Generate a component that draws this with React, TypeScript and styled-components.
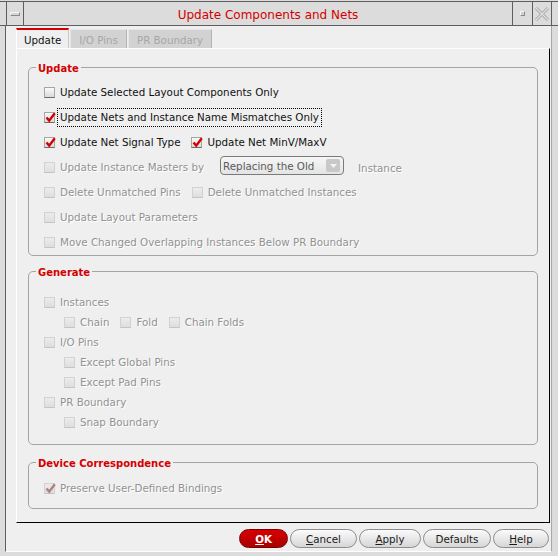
import React from 'react';
import styled, { createGlobalStyle } from 'styled-components';

// * global
const GlobalStyle = createGlobalStyle`
  html, body {
    margin: 0;
    padding: 0;
    background: #dcdcdc;
  }
  body {
    font-family: "DejaVu Sans", "Liberation Sans", sans-serif;
    font-size: 10.3px;
    color: #111;
  }
`;

// * type
type CheckProps = {
  /** 라벨 */
  label: string;
  checked?: boolean;
  disabled?: boolean;
  focused?: boolean;
};

type ButtonProps = {
  label: string;
  /** 밑줄 글자 위치 */
  mnemonic?: number;
  width: number;
  primary?: boolean;
};

// * component
function CheckMark({ disabled }: { disabled?: boolean }) {
  return (
    <MarkSvg width='13' height='13' viewBox='0 0 13 13'>
      <path
        d='M2.5 6.5 L5.2 9.6 L10.8 2.2'
        fill='none'
        stroke={disabled ? '#b08080' : '#d40000'}
        strokeWidth='2.4'
      />
    </MarkSvg>
  );
}

function Check({ label, checked, disabled, focused }: CheckProps) {
  return (
    <CheckWrap>
      <Box $disabled={disabled}>{checked && <CheckMark disabled={disabled} />}</Box>
      <Label $disabled={disabled} $focused={focused}>
        {label}
      </Label>
    </CheckWrap>
  );
}

function DialogButton({ label, mnemonic, width, primary }: ButtonProps) {
  return (
    <Btn $primary={primary} style={{ width }}>
      {mnemonic === undefined ? (
        label
      ) : (
        <>
          {label.slice(0, mnemonic)}
          <u>{label[mnemonic]}</u>
          {label.slice(mnemonic + 1)}
        </>
      )}
    </Btn>
  );
}

export default function App() {
  return (
    <>
      <GlobalStyle />
      <Window>
        <TitleBar>
          <FrameGap />
          <MenuButton>
            <Dash />
          </MenuButton>
          <Title>Update Components and Nets</Title>
          <MaxButton>
            <Dot />
          </MaxButton>
          <CloseButton>
            <svg width='16' height='16' viewBox='0 0 16 16'>
              <path d='M2 2 L14 14 M14 2 L2 14' stroke='#a0a0a0' strokeWidth='3' />
              <path d='M2 2 L14 14 M14 2 L2 14' stroke='#e6e6e6' strokeWidth='1.2' />
            </svg>
          </CloseButton>
          <FrameGap />
        </TitleBar>

        <Body>
          <Content>
            <TabBar>
              <Tab $active>Update</Tab>
              <Tab>I/O Pins</Tab>
              <Tab>PR Boundary</Tab>
            </TabBar>

            <Panel>
              <Group>
                <Legend>Update</Legend>
                <GroupBody $pt={5} $pb={0}>
                  <Row $h={25}>
                    <Check label='Update Selected Layout Components Only' />
                  </Row>
                  <Row $h={25}>
                    <Check label='Update Nets and Instance Name Mismatches Only' checked focused />
                  </Row>
                  <Row $h={25}>
                    <Check label='Update Net Signal Type' checked />
                    <Check label='Update Net MinV/MaxV' checked />
                  </Row>
                  <Row $h={25}>
                    <Check label='Update Instance Masters by' disabled />
                    <Combo>
                      <span>Replacing the Old</span>
                      <ComboArrow>
                        <svg width='7' height='4' viewBox='0 0 7 4'>
                          <path d='M0 0 L7 0 L3.5 4 Z' fill='#f4f4f4' />
                        </svg>
                      </ComboArrow>
                    </Combo>
                    <DimText>Instance</DimText>
                  </Row>
                  <Row $h={25}>
                    <Check label='Delete Unmatched Pins' disabled />
                    <Check label='Delete Unmatched Instances' disabled />
                  </Row>
                  <Row $h={25}>
                    <Check label='Update Layout Parameters' disabled />
                  </Row>
                  <Row $h={25}>
                    <Check label='Move Changed Overlapping Instances Below PR Boundary' disabled />
                  </Row>
                </GroupBody>
              </Group>

              <Group $mt={7}>
                <Legend>Generate</Legend>
                <GroupBody $pt={13} $pb={12}>
                  <Row $h={20}>
                    <Check label='Instances' disabled />
                  </Row>
                  <Row $h={20} $indent={20}>
                    <Check label='Chain' disabled />
                    <Check label='Fold' disabled />
                    <Check label='Chain Folds' disabled />
                  </Row>
                  <Row $h={20}>
                    <Check label='I/O Pins' disabled />
                  </Row>
                  <Row $h={20} $indent={20}>
                    <Check label='Except Global Pins' disabled />
                  </Row>
                  <Row $h={20} $indent={20}>
                    <Check label='Except Pad Pins' disabled />
                  </Row>
                  <Row $h={20}>
                    <Check label='PR Boundary' disabled />
                  </Row>
                  <Row $h={20} $indent={20}>
                    <Check label='Snap Boundary' disabled />
                  </Row>
                </GroupBody>
              </Group>

              <Group $mt={9}>
                <Legend>Device Correspondence</Legend>
                <GroupBody $pt={8} $pb={10}>
                  <Row $h={20}>
                    <Check label='Preserve User-Defined Bindings' checked disabled />
                  </Row>
                </GroupBody>
              </Group>
            </Panel>

            <ButtonRow>
              <DialogButton label='OK' mnemonic={0} width={49} primary />
              <DialogButton label='Cancel' mnemonic={0} width={67} />
              <DialogButton label='Apply' mnemonic={0} width={62} />
              <DialogButton label='Defaults' width={68} />
              <DialogButton label='Help' mnemonic={0} width={56} />
            </ButtonRow>
          </Content>
        </Body>
      </Window>
    </>
  );
}

// * styles
// 창 전체
const Window = styled.div`
  width: 558px;
  height: 556px;
  box-sizing: border-box;
  padding-top: 1px;
  display: flex;
  flex-direction: column;
  background: #dcdcdc;
  overflow: hidden;
`;
// 제목 표시줄
const TitleBar = styled.div`
  height: 25px;
  box-sizing: border-box;
  display: flex;
  align-items: stretch;
  border-top: 1px solid #5e5e5e;
  border-bottom: 1px solid #5e5e5e;
  background: #dcdcdc;
`;
const FrameGap = styled.div`
  width: 6px;
  flex: none;
`;
const MenuButton = styled.div`
  width: 18px;
  flex: none;
  box-sizing: border-box;
  border-left: 1px solid #5e5e5e;
  border-right: 1px solid #5e5e5e;
  display: flex;
  align-items: center;
  justify-content: center;
`;
const Dash = styled.span`
  width: 10px;
  height: 4px;
  box-sizing: border-box;
  border: 1px solid #8a8a8a;
  border-top-color: #f4f4f4;
  border-left-color: #f4f4f4;
  background: #d4d4d4;
`;
const Title = styled.div`
  flex: 1;
  text-align: center;
  font-size: 12px;
  line-height: 23px;
  padding-top: 2px;
  color: #d40000;
`;
const MaxButton = styled.div`
  width: 20px;
  flex: none;
  box-sizing: border-box;
  border-left: 1px solid #5e5e5e;
  display: flex;
  align-items: center;
  justify-content: center;
`;
const Dot = styled.span`
  width: 5px;
  height: 5px;
  box-sizing: border-box;
  border: 1px solid #8a8a8a;
  border-top-color: #f6f6f6;
  border-left-color: #f6f6f6;
  background: #d0d0d0;
`;
const CloseButton = styled(MaxButton)`
  width: 20px;
  border-right: 1px solid #5e5e5e;
`;
// 본문 프레임
const Body = styled.div`
  flex: 1;
  display: flex;
  padding: 0 6px 4px 5px;
`;
const Content = styled.div`
  flex: 1;
  display: flex;
  flex-direction: column;
  box-sizing: border-box;
  padding: 2px 1px 0 10px;
  background: #efefef;
  border-left: 1px solid #5e5e5e;
  border-right: 1px solid #a8a8a8;
  border-bottom: 1px solid #ffffff;
`;
// 탭
const TabBar = styled.div`
  height: 20px;
  display: flex;
  align-items: flex-end;
`;
const Tab = styled.div<{ $active?: boolean }>`
  box-sizing: border-box;
  height: ${({ $active }) => ($active ? '20px' : '19px')};
  padding: 1px ${({ $active }) => ($active ? '7px' : '8px')} 0;
  margin-right: 1px;
  display: flex;
  align-items: center;
  background: ${({ $active }) => ($active ? '#efefef' : '#d2d2d2')};
  color: ${({ $active }) => ($active ? '#111' : '#a6a6a6')};
  border-top: ${({ $active }) => ($active ? '2px solid #d40000' : '1px solid #e6e6e6')};
  border-left: 1px solid ${({ $active }) => ($active ? '#ffffff' : '#e6e6e6')};
  border-right: 1px solid ${({ $active }) => ($active ? '#c8c8c8' : '#b4b4b4')};
`;
const Panel = styled.div`
  height: 475px;
  box-sizing: border-box;
  display: flex;
  flex-direction: column;
  padding: 10px 11px 12px 11px;
  border-top: 1px solid #ffffff;
  border-left: 1px solid #ffffff;
  border-right: 1px solid #000000;
  border-bottom: 1px solid #000000;
`;
// 그룹 박스
const Group = styled.fieldset<{ $mt?: number }>`
  margin: ${({ $mt }) => $mt || 0}px 0 0;
  padding: 0;
  min-width: 0;
  border: 1px solid #a4a4a4;
  border-radius: 5px;
`;
const Legend = styled.legend`
  margin-left: 7px;
  padding: 4px 2px 0;
  font-weight: bold;
  font-size: 10px;
  line-height: 12px;
  color: #d40000;
`;
const GroupBody = styled.div<{ $pt: number; $pb: number }>`
  padding: ${({ $pt }) => $pt}px 0 ${({ $pb }) => $pb}px 15px;
  display: flex;
  flex-direction: column;
`;
const Row = styled.div<{ $h: number; $indent?: number }>`
  height: ${({ $h }) => $h}px;
  display: flex;
  align-items: center;
  gap: 8px;
  padding-left: ${({ $indent }) => $indent || 0}px;
`;
// 체크박스
const CheckWrap = styled.div`
  display: flex;
  align-items: center;
`;
const Box = styled.span<{ $disabled?: boolean }>`
  position: relative;
  width: 11px;
  height: 11px;
  flex: none;
  box-sizing: border-box;
  border: 1px solid ${({ $disabled }) => ($disabled ? '#d2d2d2' : '#a6a6a6')};
  border-bottom-color: ${({ $disabled }) => ($disabled ? '#c4c4c4' : '#6c6c6c')};
  background: ${({ $disabled }) =>
    $disabled ? 'linear-gradient(#ececec, #dedede)' : 'linear-gradient(#fafafa, #dadada)'};
`;
const MarkSvg = styled.svg`
  position: absolute;
  left: -1px;
  top: -2px;
`;
const Label = styled.span<{ $disabled?: boolean; $focused?: boolean }>`
  margin-left: 2px;
  padding: 2px 2px 3px;
  border: 1px dotted ${({ $focused }) => ($focused ? '#000' : 'transparent')};
  white-space: nowrap;
  color: ${({ $disabled }) => ($disabled ? '#929292' : '#111')};
  text-shadow: ${({ $disabled }) => ($disabled ? '1px 1px 0 #ffffff' : 'none')};
`;
const DimText = styled.span`
  margin-left: 6px;
  color: #929292;
  text-shadow: 1px 1px 0 #ffffff;
`;
// 콤보박스
const Combo = styled.div`
  width: 124px;
  height: 19px;
  margin-left: 5px;
  margin-top: -4px;
  box-sizing: border-box;
  display: flex;
  align-items: center;
  justify-content: space-between;
  padding: 0 3px 0 2px;
  border: 1px solid #7a7a7a;
  border-radius: 4px;
  background: linear-gradient(#f6f6f6, #e4e4e4);
  color: #5a5a5a;
`;
const ComboArrow = styled.span`
  width: 14px;
  height: 13px;
  border-radius: 2px;
  background: #c8c8c8;
  display: flex;
  align-items: center;
  justify-content: center;
`;
// 하단 버튼
const ButtonRow = styled.div`
  margin-top: 6px;
  margin-right: 1px;
  display: flex;
  justify-content: flex-end;
  gap: 2px;
`;
const Btn = styled.div<{ $primary?: boolean }>`
  height: 19px;
  box-sizing: border-box;
  display: flex;
  align-items: center;
  justify-content: center;
  border-radius: 10px;
  border: 1px solid ${({ $primary }) => ($primary ? '#7a0000' : '#8c8c8c')};
  background: ${({ $primary }) =>
    $primary ? 'linear-gradient(#d80000, #a80000)' : 'linear-gradient(#fbfbfb, #d6d6d6)'};
  color: ${({ $primary }) => ($primary ? '#ffffff' : '#1a1a1a')};
  font-weight: ${({ $primary }) => ($primary ? 'bold' : 'normal')};
`;
